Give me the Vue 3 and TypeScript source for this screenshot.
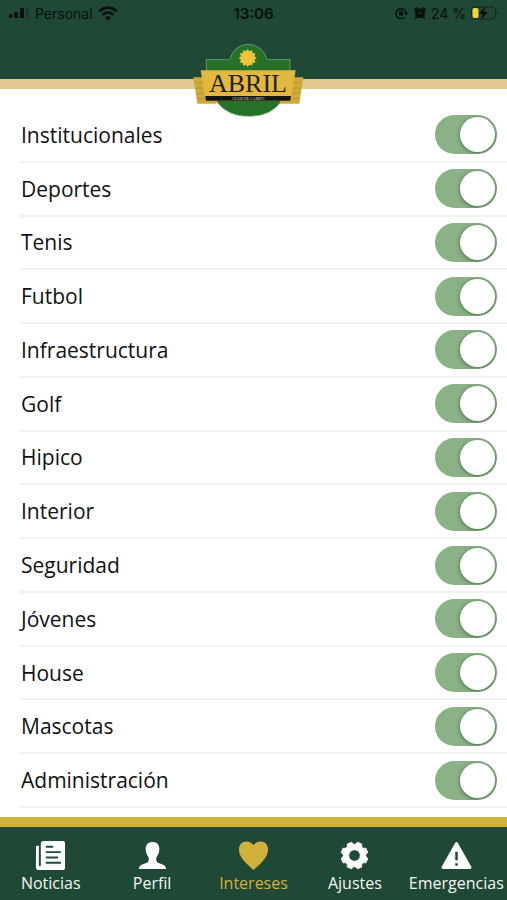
<script setup lang="ts">
import { reactive, ref } from 'vue'

interface Interest {
  id: string
  label: string
  enabled: boolean
}

interface Tab {
  id: string
  label: string
}

const names: string[] = [
  'Institucionales', 'Deportes', 'Tenis', 'Futbol', 'Infraestructura', 'Golf', 'Hipico',
  'Interior', 'Seguridad', 'Jóvenes', 'House', 'Mascotas', 'Administración',
]

const interests = reactive<Interest[]>(
  names.map((label, i) => ({ id: `interest-${i}`, label, enabled: true })),
)

const tabs: Tab[] = [
  { id: 'news', label: 'Noticias' },
  { id: 'profile', label: 'Perfil' },
  { id: 'interests', label: 'Intereses' },
  { id: 'settings', label: 'Ajustes' },
  { id: 'emergency', label: 'Emergencias' },
]

const active = ref('interests')

function polar(cx: number, cy: number, r: number, degrees: number): string {
  const a = (degrees * Math.PI) / 180
  return `${(cx + r * Math.sin(a)).toFixed(1)} ${(cy - r * Math.cos(a)).toFixed(1)}`
}

// Points of the sun in the club's crest
const sun = Array.from({ length: 24 }, (_, i) => polar(203, 84, i % 2 === 0 ? 27 : 21, i * 15)).join(' ')

// Eight-toothed wheel with curved notches and a round hole
const gear =
  Array.from({ length: 8 }, (_, i) => {
    const a = i * 45 + 22.5
    return `${i === 0 ? 'M' : 'L'}${polar(16, 16, 14, a - 10)}L${polar(16, 16, 14, a + 10)}Q${polar(16, 16, 9, a + 22.5)} ${polar(16, 16, 14, a + 35)}`
  }).join('') + 'ZM16 10a6 6 0 1 0 0 12 6 6 0 0 0 0-12z'
</script>

<template>
  <div class="screen">
    <header class="header">
      <div class="status">
        <div class="status-side">
          <svg class="signal" width="22" height="12" viewBox="0 0 22 12" aria-hidden="true">
            <rect x="1" y="7" width="3" height="4" rx="1" />
            <rect x="6" y="5" width="4" height="6" rx="1" />
            <rect x="12" y="1" width="4" height="10" rx="1" />
            <rect x="18" y="0" width="3" height="11" rx="1" opacity="0.2" />
          </svg>
          <span>Personal</span>
          <svg width="20" height="15" viewBox="0 0 18 14" fill="none" stroke="#06110c" aria-hidden="true">
            <path d="M1 5.200C5.500.4 12.500.4 17 5.200" stroke-width="2.600" />
            <path d="M4 8.200c2.900-2.900 7.100-2.900 10 0" stroke-width="2.400" />
            <path d="M9 13.500 6.300 10.800c1.500-1.500 3.900-1.500 5.400 0z" fill="#06110c" stroke="none" />
          </svg>
        </div>
        <time class="clock">13:06</time>
        <div class="status-side right">
          <svg width="14" height="12" viewBox="0 0 14 12" fill="none" stroke="#06110c" aria-hidden="true">
            <path d="M9.500 10.300A5 5 0 1 1 11 6" stroke-width="1.400" />
            <path d="M8.800 5.500h4.600L11 8.500z" fill="#06110c" stroke="none" />
            <rect x="4" y="5" width="4" height="3.500" fill="#06110c" stroke="none" />
            <path d="M4.800 5.200V4.300a1.200 1.200 0 0 1 2.400 0v.9" />
          </svg>
          <svg width="12" height="12" viewBox="0 0 12 12" aria-hidden="true">
            <circle cx="6" cy="6.300" r="5" fill="#06110c" />
            <path d="M.5 3.500 3 .8M11.500 3.500 9 .8M2.500 10 1.300 11.500M9.500 10l1.200 1.500" stroke="#06110c" stroke-width="2" />
            <path d="M6 4v2.500H4" fill="none" stroke="#1f4936" stroke-width=".7" />
          </svg>
          <span>24 %</span>
          <svg width="28" height="14" viewBox="0 0 28 14" aria-hidden="true">
            <rect x=".5" y="1" width="24" height="12" rx="3.500" fill="none" stroke="#12291e" />
            <path d="M26 5c1.500.5 1.500 3.500 0 4z" fill="#12291e" />
            <rect x="1.500" y="2" width="6" height="10" rx="2" fill="#f5d33c" />
            <path d="M14.500.5 7.500 8h4L10 13.500 17 6h-4z" fill="#06110c" />
          </svg>
        </div>
      </div>
      <svg class="logo" viewBox="39 36 333 228" role="img" aria-label="Abril Club de Campo">
        <path
          d="M79 212V89h67q4 0 5-5a56 56 0 0 1 108 0q1 5 5 5h66v123h-25q-31 47-98 47t-99-47z"
          fill="#26702a" stroke="#7fb58a" stroke-width="2"
        />
        <polygon :points="sun" fill="#eec33c" />
        <path d="M40 142h70v79H52zM370 142h-70v79h58z" fill="#cfaa38" />
        <path d="M46 158h30M48 174h28M50 190h28M52 206h30M364 158h-30M362 174h-28M360 190h-28M358 206h-30" stroke="#ae8e2c" stroke-width="2" />
        <path d="M62 121h285l-15 91H77z" fill="#e2b83f" />
        <path d="M76 198h257l-2 14H78z" fill="#15150f" />
        <text x="204" y="186" class="crest-name">ABRIL</text>
        <text x="205" y="209" class="crest-sub">CLUB DE CAMPO</text>
      </svg>
    </header>

    <main class="list">
      <div v-for="item in interests" :key="item.id" class="row">
        <label :for="item.id" class="row-label">{{ item.label }}</label>
        <input :id="item.id" v-model="item.enabled" class="toggle" type="checkbox" role="switch" />
      </div>
    </main>

    <nav class="tabs">
      <button
        v-for="tab in tabs"
        :key="tab.id"
        type="button"
        class="tab"
        :class="{ active: active === tab.id }"
        @click="active = tab.id"
      >
        <svg class="tab-icon" viewBox="0 0 32 32" aria-hidden="true">
          <template v-if="tab.id === 'news'">
            <path d="M9 1h20q2 0 2 2v26q0 2-2 2H4q-3 0-3-3V7q0-1 1-1h2v20q0 1 1 1t1-1V4q0-3 3-3z" />
            <path d="M12 7h6M12 12.500h14M12 18h11M12 23.500h14" stroke="#1f4936" stroke-width="2" stroke-linecap="round" />
          </template>
          <path
            v-else-if="tab.id === 'profile'"
            d="M16 2c5 0 7.500 3.500 7 8 0 4-2 6-3 8-.5 3 0 5 3 6 4 1.500 7 2 7 6H2c0-4 3-4.500 7-6 3-1 3.500-3 3-6-1-2-3-4-3-8-.5-4.500 2-8 7-8z"
          />
          <path
            v-else-if="tab.id === 'interests'"
            d="M16 31C11 26 1 19 1 10c0-5 3-8.500 7.500-8.500 3.500 0 6 1.500 7.500 4 1.500-2.500 4-4 7.500-4C28 1.500 31 5 31 10c0 9-10 16-15 21z"
          />
          <path
            v-else-if="tab.id === 'settings'"
            :d="gear"
            fill-rule="evenodd"
            stroke="#fff"
            stroke-width="1"
            stroke-linejoin="round"
          />
          <template v-else>
            <path d="M14.300 3.500q1.700-3 3.400 0L31 27q1.500 3-2 3H3q-3.500 0-2-3z" />
            <path d="M16 12v9M16 24v2.500" stroke="#1f4936" stroke-width="2.500" />
          </template>
        </svg>
        <span>{{ tab.label }}</span>
      </button>
    </nav>
  </div>
</template>

<style>
body {
  margin: 0;
  background: #fff;
}
</style>

<style scoped>
.screen {
  display: flex;
  flex-direction: column;
  min-height: 100vh;
  font-family: 'Open Sans', 'Noto Sans', sans-serif;
  color: #111;
}

.header {
  position: relative;
  box-sizing: border-box;
  height: 89px;
  background: #1f4936;
  border-bottom: 10px solid #e0ca8f;
}

.status {
  display: grid;
  grid-template-columns: 1fr auto 1fr;
  align-items: center;
  height: 26px;
  padding: 0 8px;
  font-family: Inter, 'Liberation Sans', sans-serif;
  font-size: 14px;
  color: #06110c;
}

.status-side {
  display: flex;
  align-items: center;
  gap: 5px;
}

.status-side.right {
  justify-content: flex-end;
}

.signal {
  fill: #06110c;
}

.clock {
  font-size: 15px;
  font-weight: 600;
}

.logo {
  position: absolute;
  top: 42px;
  left: calc(50% - 61px);
  width: 111px;
  height: 76px;
}

.crest-name {
  font-family: 'Liberation Serif', serif;
  font-size: 78px;
  text-anchor: middle;
  fill: #24200f;
}

.crest-sub {
  font-family: 'Liberation Serif', serif;
  font-size: 12px;
  text-anchor: middle;
  fill: #ddd;
}

.list {
  flex: 1;
  display: grid;
  grid-auto-rows: minmax(48px, 1fr);
  padding: 20px 0 9px 20px;
}

.row {
  display: flex;
  align-items: center;
  justify-content: space-between;
  padding: 0 10px 0 1px;
  border-bottom: 2px solid #f1f1f1;
}

.row-label {
  font-size: 21px;
  line-height: 28px;
}

.toggle {
  appearance: none;
  display: flex;
  align-items: center;
  box-sizing: border-box;
  width: 62px;
  height: 39px;
  margin: 0;
  padding: 0 2px;
  border-radius: 20px;
  background: #c9cdc9;
  overflow: hidden;
  cursor: pointer;
}

.toggle::before {
  content: '';
  width: 35px;
  height: 35px;
  border-radius: 50%;
  background: #fff;
  box-shadow: 0 1px 4px rgb(20 60 20 / 60%);
}

.toggle:checked {
  justify-content: flex-end;
  background: #8bb187;
}

.tabs {
  display: grid;
  grid-template-columns: repeat(5, 1fr);
  box-sizing: border-box;
  height: 83px;
  background: #1f4936;
  border-top: 10px solid #d0b13b;
}

.tab {
  display: flex;
  flex-direction: column;
  align-items: center;
  gap: 1px;
  min-width: 0;
  padding: 13px 0 0;
  border: 0;
  background: none;
  font-family: inherit;
  font-size: 16px;
  line-height: 22px;
  color: #f2f6f3;
  cursor: pointer;
}

.tab-icon {
  width: 31px;
  height: 31px;
  fill: #fff;
}

.tab.active {
  color: #d0b13b;
}

.tab.active .tab-icon {
  fill: #d0b13b;
}
</style>
